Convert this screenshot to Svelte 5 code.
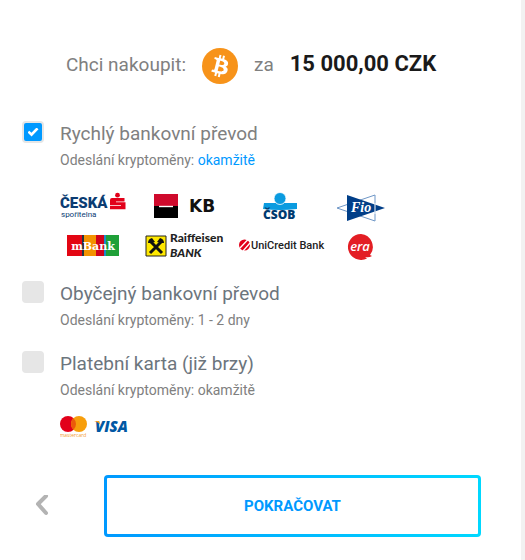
<script>
  // ── Data ─────────────────────────────────────────────────────
  const METHODS = [
    { id: 'fast', title: 'Rychlý bankovní převod', speed: 'okamžitě', logos: 'banks' },
    { id: 'regular', title: 'Obyčejný bankovní převod', speed: '1 - 2 dny' },
    { id: 'card', title: 'Platební karta (již brzy)', speed: 'okamžitě', logos: 'cards' },
  ];

  // ── State ────────────────────────────────────────────────────
  let selected = $state('fast');
  let amount = $state('15 000,00 CZK');
</script>

<main class="card">
  <h1 class="summary">
    <span>Chci nakoupit:</span>
    <svg class="coin" viewBox="0 0 32 32" role="img" aria-label="Bitcoin">
      <circle cx="16" cy="16" r="16" fill="#f7931a" />
      <path fill="#fff" d="M23.189 14.02c.314-2.096-1.283-3.223-3.465-3.975l.708-2.84-1.728-.43-.69 2.765c-.454-.114-.92-.22-1.385-.326l.695-2.783L15.596 6l-.708 2.839c-.376-.086-.746-.17-1.104-.26l.002-.009-2.384-.595-.46 1.846s1.283.294 1.256.312c.7.175.826.638.805 1.006l-.806 3.235c.048.012.11.03.18.057l-.183-.045-1.13 4.532c-.086.212-.303.531-.793.41.018.025-1.256-.313-1.256-.313l-.858 1.978 2.25.561c.418.105.828.215 1.231.318l-.715 2.872 1.727.43.708-2.84c.472.127.93.245 1.378.357l-.706 2.828 1.728.43.715-2.866c2.948.558 5.164.333 6.097-2.333.752-2.146-.037-3.385-1.588-4.192 1.13-.26 1.98-1.003 2.207-2.538zm-3.95 5.538c-.533 2.147-4.148.986-5.32.695l.95-3.805c1.172.293 4.929.872 4.37 3.11zm.535-5.569c-.487 1.953-3.495.96-4.47.717l.86-3.45c.975.243 4.118.696 3.61 2.733z" />
    </svg>
    <span>za</span>
    <strong class="amount">{amount}</strong>
  </h1>

  <div class="methods">
    {#each METHODS as m (m.id)}
      <div class="method">
        <input class="tick" type="checkbox" id={m.id} checked={selected === m.id} onchange={() => (selected = m.id)} />
        <div class="method__body">
          <label class="method__title" class:on={selected === m.id} for={m.id}>{m.title}</label>
          <p class="method__speed">Odeslání kryptoměny: <span class:hl={selected === m.id}>{m.speed}</span></p>

          {#if m.logos === 'banks'}
            <div class="banks">
              <svg viewBox="0 0 84 30" role="img" aria-label="Česká spořitelna">
                <text x="9" y="17" font-family="Roboto" font-weight="900" font-size="15" fill="#0b3c73">ČESKÁ</text>
                <text x="10" y="26" font-family="Roboto" font-size="8" fill="#0b3c73">spořitelna</text>
                <circle cx="66.500" cy="4.200" r="2.400" fill="#e2001a" />
                <path d="M61 7h12.500v3.400H65v.800h9.500v7H59v-3.400h11v-.800H59V9q0-2 2-2z" fill="#e2001a" />
              </svg>
              <svg viewBox="0 0 84 30" role="img" aria-label="KB">
                <path d="M9 3h24v12H9z" fill="#cf0a2c" />
                <path d="M9 15h24v12H9z" fill="#000" />
                <path d="M14 15.500h14" stroke="#fff" stroke-width="1.400" />
                <text x="44" y="21" font-family="DejaVu Sans" font-weight="700" font-size="17" fill="#111">KB</text>
              </svg>
              <svg viewBox="0 0 84 30" role="img" aria-label="ČSOB">
                <path d="M25 12h12q4 2 8 0h13v6q-17 2-34 0z" fill="#0a9be0" />
                <circle cx="41" cy="7.500" r="6" fill="#0a9be0" stroke="#fff" stroke-width=".8" />
                <text x="24" y="28" font-family="Open Sans" font-weight="800" font-size="12" fill="#003a70">ČSOB</text>
              </svg>
              <svg viewBox="0 0 56 30" role="img" aria-label="Fio">
                <path d="M4 17 42 4v26z" fill="#fff" stroke="#6f97c7" stroke-width="1" />
                <path d="M14 4 52 17 14 30z" fill="#003e88" />
                <path d="M42 12v11" stroke="#fff" stroke-width="1" />
                <text x="18" y="21" font-family="Liberation Serif" font-weight="700" font-style="italic" font-size="14" fill="#fff">Fio</text>
              </svg>
              <svg viewBox="0 0 84 30" role="img" aria-label="mBank">
                <path d="M16 4h15v21H16z" fill="#e30613" />
                <path d="M31 4h2v21h-2z" fill="#26323d" />
                <path d="M33 4h12v21H33z" fill="#f39200" />
                <path d="M45 4h8v21h-8z" fill="#d0021b" />
                <path d="M53 4h2v21h-2z" fill="#1c8bc9" />
                <path d="M55 4h13v21H55z" fill="#1fa038" />
                <text x="42" y="19" text-anchor="middle" font-family="DejaVu Serif" font-weight="700" font-size="11" fill="#fff">mBank</text>
              </svg>
              <svg viewBox="0 0 84 30" role="img" aria-label="Raiffeisen Bank">
                <path d="M1 5h20v20H1z" fill="#ffe800" stroke="#222" stroke-width="1" />
                <path d="m5 22 12-12M17 22 5 10" stroke="#111" stroke-width="3" />
                <path d="M3 12q0-4 4-5l3 4-4 1zM19 12q0-4-4-5l-3 4 4 1z" fill="#111" />
                <text x="25" y="11" font-family="Lato" font-weight="900" font-size="12" fill="#222">Raiffeisen</text>
                <text x="25" y="26" font-family="Lato" font-weight="900" font-style="italic" font-size="12" fill="#222">BANK</text>
              </svg>
              <svg viewBox="0 0 84 30" role="img" aria-label="UniCredit Bank">
                <circle cx="5.500" cy="14" r="5.500" fill="#e2001a" />
                <path d="m1 17 8-8.500M4 20l7-8" stroke="#fff" stroke-width="1.300" />
                <text x="12" y="18" font-family="Roboto" font-weight="500" font-size="11" fill="#222">UniCredit Bank</text>
              </svg>
              <svg viewBox="0 0 56 30" role="img" aria-label="Era">
                <path d="M28 3a13 13 0 1 0 6 24.500l-2-1.500q4 1 7-1l-2-1A13 13 0 0 0 28 3z" fill="#e31e24" />
                <text x="27" y="20" text-anchor="middle" font-family="Open Sans" font-weight="600" font-style="italic" font-size="13" fill="#fff">era</text>
              </svg>
            </div>
          {:else if m.logos === 'cards'}
            <div class="cards">
              <svg width="27" height="24" viewBox="0 0 27 24" role="img" aria-label="Mastercard">
                <circle cx="8" cy="9" r="8" fill="#e2001a" />
                <circle cx="19" cy="9" r="8" fill="#f79e0b" />
                <path d="M13.500 3.200a8 8 0 0 1 0 11.600 8 8 0 0 1 0-11.600z" fill="#eb5a0a" />
                <text x="13" y="22" text-anchor="middle" font-family="Open Sans" font-size="5" fill="#f39a2d">mastercard</text>
              </svg>
              <svg width="36" height="24" viewBox="0 0 36 24" role="img" aria-label="Visa">
                <text x="2" y="17" font-family="Open Sans" font-weight="800" font-style="italic" font-size="15" fill="#0058a4">VISA</text>
                <path d="M1 6h5l2 5q-2-4-7-5z" fill="#f79e1b" />
              </svg>
            </div>
          {/if}
        </div>
      </div>
    {/each}
  </div>

  <div class="actions">
    <button class="back" type="button" aria-label="Zpět">
      <svg width="14" height="22" viewBox="0 0 14 22" aria-hidden="true">
        <path d="M11 1 3 9l8 9" fill="none" stroke="#b3b3b3" stroke-width="4" stroke-linecap="round" stroke-linejoin="round" />
      </svg>
    </button>
    <button class="next" type="button">POKRAČOVAT</button>
  </div>
</main>

<style>
  :global(body) { margin: 0; background: #fff; }

  .card { box-sizing: border-box; min-height: 100vh; padding: 48px 40px 23px 22px; border-right: 4px solid #f2f2f2; background: #fff; font-family: Roboto, sans-serif; color: #808080; }

  .summary { display: flex; align-items: baseline; gap: 16px; margin: 0 0 37px 44px; font-size: 19px; font-weight: 400; line-height: 32px; white-space: nowrap; }
  .coin { align-self: center; width: 36px; height: 36px; }
  .amount { font-size: 22px; font-weight: 700; color: #1a1a1a; }

  .methods { display: flex; flex-direction: column; gap: 18px; }
  .method { display: flex; gap: 16px; }
  .method__title { display: block; font-size: 19px; line-height: 26px; color: #6c757d; cursor: pointer; }
  .method__title.on { color: #808080; }
  .method__speed { margin: 0; font-size: 14px; line-height: 26px; }
  .hl { color: #0099ff; }

  .tick { appearance: none; box-sizing: border-box; flex: none; display: grid; place-items: center; width: 22px; height: 22px; margin: 0; border: 2px solid #e6e6e6; border-radius: 4px; background: #e6e6e6; cursor: pointer; }
  .tick:checked { background: #0099ff; }
  .tick:checked::after { content: ''; width: 11px; height: 9px; background: #fff; clip-path: polygon(0 55%, 16% 36%, 36% 58%, 82% 0, 100% 20%, 37% 100%); }

  .banks { display: grid; grid-template-columns: 84px 84px 84px 56px; gap: 10px; margin: 18px 0 2px -9px; }
  .banks svg { width: 100%; height: 30px; overflow: visible; }
  .cards { display: flex; gap: 6px; margin-top: 12px; }

  .actions { display: flex; align-items: center; gap: 42px; margin-top: 36px; }
  .back { display: grid; place-items: center; width: 40px; height: 40px; padding: 0; border: 0; background: transparent; cursor: pointer; }
  .next { flex: 1; height: 62px; border: 3px solid transparent; border-radius: 4px; background: linear-gradient(#fff, #fff) padding-box, linear-gradient(90deg, #0099ff, #00d8ff) border-box; font-family: inherit; font-size: 15px; font-weight: 700; color: #0099ff; cursor: pointer; }
</style>
